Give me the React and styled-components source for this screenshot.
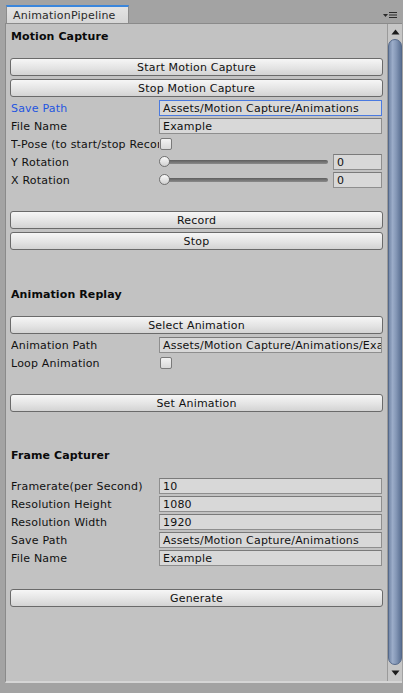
import styled, { createGlobalStyle } from "styled-components";

const GlobalStyle = createGlobalStyle`
html, body {
  margin: 0;
  padding: 0;
  background: #a3a3a3;
}
body {
  font-family: "DejaVu Sans", Verdana, sans-serif;
  font-size: 11px;
  letter-spacing: 0.2px;
  color: #101010;
}
* { box-sizing: border-box; }
`;

const Window = styled.div`
width: 403px;
height: 693px;
padding-top: 5px;
display: flex;
flex-direction: column;
background: #a3a3a3;
`;

const TabBar = styled.div`
height: 18px;
display: flex;
align-items: stretch;
justify-content: space-between;
padding-left: 6px;
padding-right: 5px;
`;

const Tab = styled.div`
width: 123px;
border-top: 2px solid #3a86dc;
border-left: 1px solid #8c8c8c;
border-right: 1px solid #8c8c8c;
background: linear-gradient(#e4e4e4, #d6d6d6);
padding-left: 6px;
display: flex;
align-items: center;
color: #2a2a2a;
`;

const MenuIcon = styled.div`
display: flex;
align-items: center;
padding-top: 2px;
`;

const Panel = styled.div`
height: 660px;
margin: 0 1px 0 5px;
border-top: 1px solid #8a8a8a;
border-left: 1px solid #8a8a8a;
border-bottom: 2px solid #d6d6d6;
background: #c2c2c2;
display: flex;
`;

const Content = styled.div`
flex: 1;
min-width: 0;
display: flex;
flex-direction: column;
`;

const Header = styled.div`
height: 18px;
margin-top: ${(p) => p.$top}px;
padding-left: 5px;
display: flex;
align-items: center;
font-weight: bold;
letter-spacing: 0.1px;
color: #0a0a0a;
`;

const Button = styled.div`
height: 18px;
margin: ${(p) => p.$top || 0}px 4px 0 4px;
border: 1px solid #6a6a6a;
border-radius: 3px;
background: linear-gradient(#f6f6f6, #e4e4e4 55%, #d3d3d3);
display: flex;
align-items: center;
justify-content: center;
color: #111;
`;

const Rows = styled.div`
margin-top: ${(p) => p.$top}px;
display: flex;
flex-direction: column;
`;

const Row = styled.div`
height: 18px;
display: flex;
align-items: center;
padding: 0 5px 0 5px;
`;

const Label = styled.div`
width: 148px;
flex: none;
white-space: nowrap;
overflow: hidden;
color: ${(p) => (p.$active ? "#1f55e0" : "#111")};
`;

const Field = styled.div`
flex: 1;
min-width: 0;
height: 16px;
padding-left: 3px;
border: 1px solid ${(p) => (p.$focus ? "#4a7ae0" : "#8e8e8e")};
border-top-color: ${(p) => (p.$focus ? "#4a7ae0" : "#7a7a7a")};
background: #d8d8d8;
white-space: nowrap;
overflow: hidden;
display: flex;
align-items: center;
color: #111;
`;

const NumberField = styled(Field)`
flex: none;
width: 49px;
margin-left: 5px;
`;

const Checkbox = styled.div`
width: 12px;
height: 12px;
margin-left: 1px;
border: 1px solid #7a7a7a;
border-radius: 2px;
background: linear-gradient(#f2f2f2, #d8d8d8);
`;

const Slider = styled.div`
flex: 1;
height: 16px;
position: relative;
display: flex;
align-items: center;
padding-left: 1px;
`;

const Track = styled.div`
flex: 1;
height: 4px;
border-radius: 2px;
background: linear-gradient(#5e5e5e, #8a8a8a);
`;

const Thumb = styled.div`
position: absolute;
left: 0;
top: 2px;
width: 11px;
height: 11px;
border-radius: 50%;
border: 1px solid #707070;
background: linear-gradient(#fafafa, #d0d0d0);
`;

const Scrollbar = styled.div`
width: 15px;
flex: none;
border-left: 1px solid #9a9a9a;
background: #c6c6c6;
display: flex;
flex-direction: column;
align-items: center;
`;

const Arrow = styled.div`
height: ${(p) => p.$h}px;
display: flex;
align-items: center;
justify-content: center;
`;

const ScrollThumb = styled.div`
flex: 1;
width: 14px;
border-radius: 7px;
border: 1px solid #55698a;
background: linear-gradient(to right, #7488a8, #9cadc9 30%, #8497b6 60%, #5c7193);
`;

const Slot = ({ label, value, focus, active }) => (
  <Row>
    <Label $active={active}>{label}</Label>
    <Field $focus={focus}>{value}</Field>
  </Row>
);

const SliderRow = ({ label }) => (
  <Row>
    <Label>{label}</Label>
    <Slider>
      <Track />
      <Thumb />
    </Slider>
    <NumberField>0</NumberField>
  </Row>
);

const CheckRow = ({ label }) => (
  <Row>
    <Label>{label}</Label>
    <Checkbox />
  </Row>
);

const App = () => {
  return (
    <Window>
      <GlobalStyle />
      <TabBar>
        <Tab>AnimationPipeline</Tab>
        <MenuIcon>
          <svg width="16" height="8" viewBox="0 0 16 8">
            <path d="M1 3h5L3.5 6z" fill="#2a2a2a" />
            <path d="M7 1.5h8M7 4h8M7 6.5h8" stroke="#2a2a2a" strokeWidth="1.2" />
          </svg>
        </MenuIcon>
      </TabBar>
      <Panel>
        <Content>
          <Header $top={3}>Motion Capture</Header>
          <Button $top={13}>Start Motion Capture</Button>
          <Button $top={3}>Stop Motion Capture</Button>
          <Rows $top={2}>
            <Slot label="Save Path" value="Assets/Motion Capture/Animations" focus active />
            <Slot label="File Name" value="Example" />
            <CheckRow label="T-Pose (to start/stop Recording)" />
            <SliderRow label="Y Rotation" />
            <SliderRow label="X Rotation" />
          </Rows>
          <Button $top={22}>Record</Button>
          <Button $top={3}>Stop</Button>

          <Header $top={35}>Animation Replay</Header>
          <Button $top={13}>Select Animation</Button>
          <Rows $top={2}>
            <Slot label="Animation Path" value="Assets/Motion Capture/Animations/Example.anim" />
            <CheckRow label="Loop Animation" />
          </Rows>
          <Button $top={22}>Set Animation</Button>

          <Header $top={34}>Frame Capturer</Header>
          <Rows $top={13}>
            <Slot label="Framerate(per Second)" value="10" />
            <Slot label="Resolution Height" value="1080" />
            <Slot label="Resolution Width" value="1920" />
            <Slot label="Save Path" value="Assets/Motion Capture/Animations" />
            <Slot label="File Name" value="Example" />
          </Rows>
          <Button $top={22}>Generate</Button>
        </Content>
        <Scrollbar>
          <Arrow $h={15}>
            <svg width="9" height="6" viewBox="0 0 9 6">
              <path d="M4.5 0.5L8.5 5.5H0.5z" fill="#1a1a1a" />
            </svg>
          </Arrow>
          <ScrollThumb />
          <Arrow $h={16}>
            <svg width="9" height="6" viewBox="0 0 9 6">
              <path d="M0.5 0.5H8.5L4.5 5.5z" fill="#1a1a1a" />
            </svg>
          </Arrow>
        </Scrollbar>
      </Panel>
    </Window>
  );
};

export default App;
